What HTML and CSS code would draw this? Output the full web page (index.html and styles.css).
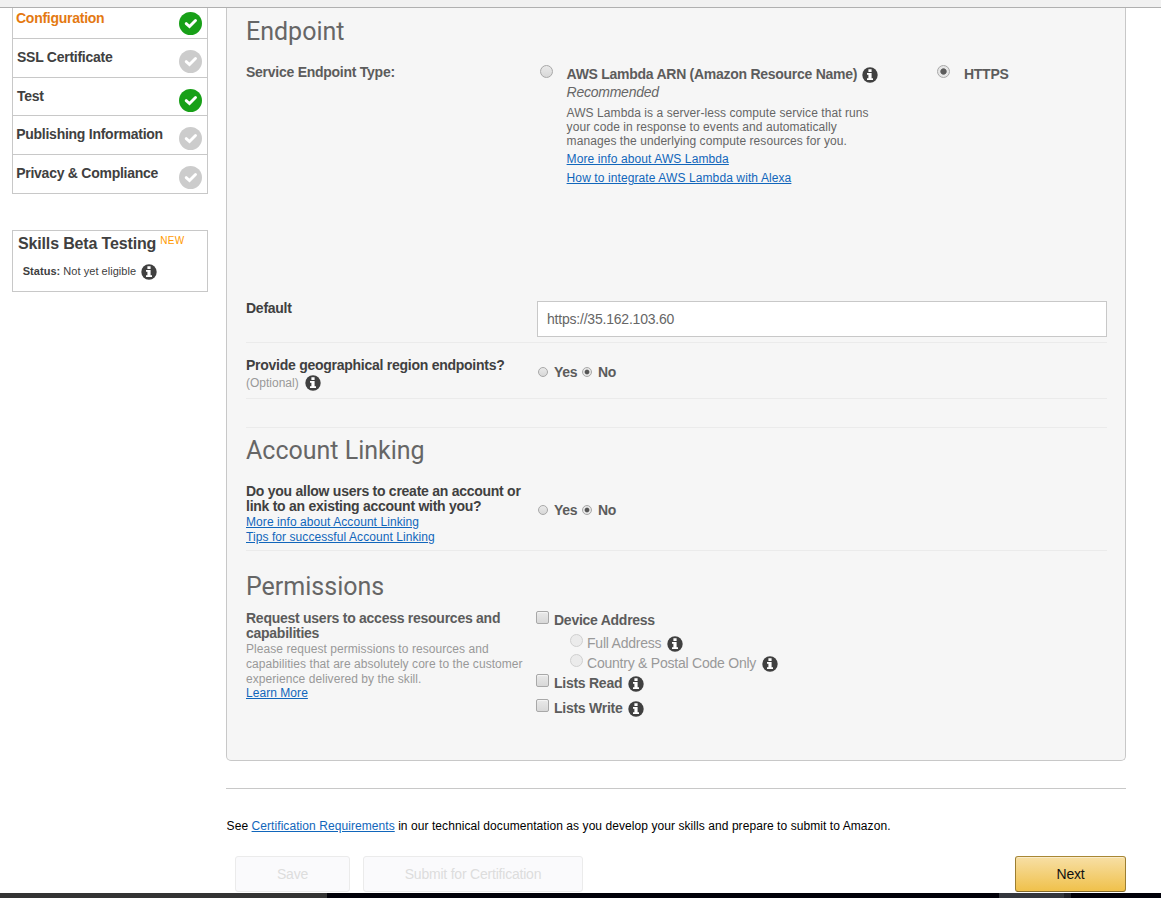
FILE: index.html
```html
<!DOCTYPE html>
<html lang="en">
<head>
<meta charset="utf-8">
<title>Skill Configuration</title>
<link rel="stylesheet" href="styles.css">
</head>
<body>
<svg class="defs" width="0" height="0" aria-hidden="true">
  <symbol id="check" viewBox="0 0 23 23"><circle cx="11.5" cy="11.5" r="11.5" fill="currentColor"/><path d="M7.2 11.6l3.3 2.9 6-6" fill="none" stroke="#fff" stroke-width="2.9" stroke-linecap="round"/></symbol>
  <symbol id="info" viewBox="0 0 16 16"><circle cx="8" cy="8" r="7.7" fill="#404040"/><path d="M6.4 2.2h3.2v2.8H6.4zM5 6h4.6v5.2H11V13H5v-1.8h1.4V7.8H5z" fill="#fff"/></symbol>
</svg>
<div class="topbar"></div>
<main class="page">
  <aside class="sidebar">
    <nav class="steps">
      <a class="step first active"><span>Configuration</span><svg class="check done"><use href="#check"/></svg></a>
      <a class="step"><span>SSL Certificate</span><svg class="check"><use href="#check"/></svg></a>
      <a class="step short"><span>Test</span><svg class="check done"><use href="#check"/></svg></a>
      <a class="step tight"><span>Publishing Information</span><svg class="check"><use href="#check"/></svg></a>
      <a class="step tight"><span>Privacy &amp; Compliance</span><svg class="check"><use href="#check"/></svg></a>
    </nav>
    <section class="beta">
      <h3><span>Skills Beta Testing</span> <span class="new">NEW</span></h3>
      <p><b>Status:</b>&nbsp;<span>Not yet eligible</span><svg class="info"><use href="#info"/></svg></p>
    </section>
  </aside>
  <div class="content">
    <section class="panel">
      <h2>Endpoint</h2>
      <div class="row type-row">
        <div class="label soft">Service Endpoint Type:</div>
        <div class="types">
          <input type="radio" name="type">
          <div class="lambda">
            <div class="opt-title"><span>AWS Lambda ARN (Amazon Resource Name)</span><svg class="info"><use href="#info"/></svg></div>
            <em>Recommended</em>
            <p>AWS Lambda is a server-less compute service that runs<br>your code in response to events and automatically<br>manages the underlying compute resources for you.</p>
            <a href="#">More info about AWS Lambda</a>
            <a href="#">How to integrate AWS Lambda with Alexa</a>
          </div>
          <input type="radio" name="type" checked>
          <div class="opt-title">HTTPS</div>
        </div>
      </div>
      <div class="row default-row">
        <div class="label">Default</div>
        <input class="url" type="text" value="https://35.162.103.60">
      </div>
      <div class="row geo-row">
        <div>
          <div class="label">Provide geographical region endpoints?</div>
          <div class="optional"><span>(Optional)</span><svg class="info"><use href="#info"/></svg></div>
        </div>
        <div class="yesno"><input type="radio" name="geo"><span>Yes</span><input type="radio" name="geo" checked><span>No</span></div>
      </div>
      <div class="row blank-row"></div>
      <h2 class="h-account">Account Linking</h2>
      <div class="row account-row">
        <div>
          <div class="label">Do you allow users to create an account or<br>link to an existing account with you?</div>
          <div class="small-links"><a href="#">More info about Account Linking</a><a href="#">Tips for successful Account Linking</a></div>
        </div>
        <div class="yesno"><input type="radio" name="link"><span>Yes</span><input type="radio" name="link" checked><span>No</span></div>
      </div>
      <h2 class="h-perm">Permissions</h2>
      <div class="row perm-row">
        <div>
          <div class="label soft">Request users to access resources and<br>capabilities</div>
          <p class="hint">Please request permissions to resources and<br>capabilities that are absolutely core to the customer<br>experience delivered by the skill.</p>
          <a class="learn" href="#">Learn More</a>
        </div>
        <div class="perms">
          <label class="perm p-device"><input type="checkbox"><span>Device Address</span></label>
          <label class="perm sub"><input type="radio" disabled><span>Full Address</span><svg class="info"><use href="#info"/></svg></label>
          <label class="perm sub"><input type="radio" disabled><span>Country &amp; Postal Code Only</span><svg class="info"><use href="#info"/></svg></label>
          <label class="perm p-read"><input type="checkbox"><span>Lists Read</span><svg class="info"><use href="#info"/></svg></label>
          <label class="perm"><input type="checkbox"><span>Lists Write</span><svg class="info"><use href="#info"/></svg></label>
        </div>
      </div>
    </section>
    <footer class="footer">
      <p class="see">See <a href="#">Certification Requirements</a> in our technical documentation as you develop your skills and prepare to submit to Amazon.</p>
      <div class="actions">
        <button class="btn save" disabled>Save</button>
        <button class="btn submit" disabled>Submit for Certification</button>
        <button class="btn next">Next</button>
      </div>
    </footer>
  </div>
</main>
<div class="taskbar"><i class="t-search"></i><i class="t-gap"></i><i class="t-active"></i><i class="t-edge"></i></div>
</body>
</html>
```
FILE: styles.css
```css
* { box-sizing: border-box; margin: 0; padding: 0; }
body {
  width: 1161px; height: 898px; overflow: hidden;
  display: flex; flex-direction: column;
  background: #fff; color: #404040;
  font: 14px/15px "Liberation Sans", Arial, sans-serif;
}
.defs { position: absolute; }
a { color: #1166bb; }
svg { flex: none; display: block; }
.topbar { height: 8px; flex: none; background: #f1f1f1; border-bottom: 1px solid #b0b0b0; }
.page { display: flex; gap: 18px; height: 885px; padding-left: 12px; flex: none; }

/* Sidebar */
.sidebar { width: 196px; flex: none; }
.steps { border: solid #c8c8c8; border-width: 0 1px; }
.step {
  height: 39px; display: flex; justify-content: space-between; align-items: flex-start;
  padding: 11px 5px 0 4px; border-bottom: 1px solid #c8c8c8;
  color: #404040; font-weight: bold; letter-spacing: -.26px; white-space: nowrap;
}
.step.short { height: 38px; }
.step.tight { padding-left: 3.2px; }
.step.first { height: 31px; padding-top: 3px; padding-left: 3px; }
.step.active { color: #e47911; }
.check { width: 23px; height: 23px; color: #ccc; }
.check.done { color: #18a018; }
.first .check { margin-top: 1px; }
.beta { margin-top: 36px; height: 62px; border: 1px solid #c8c8c8; padding: 4px 5px; white-space: nowrap; }
.beta h3 { display: flex; gap: 4px; font-size: 16px; line-height: 18px; letter-spacing: -.15px; }
.new { font-size: 10px; line-height: 12px; font-weight: normal; letter-spacing: .3px; color: #ff9900; }
.beta p { display: flex; font-size: 11px; line-height: 14px; letter-spacing: .04px; padding: 11px 0 0 4.7px; }
.beta .info { margin-left: 5px; }

/* Main panel */
.content { width: 900px; }
.panel {
  height: 753px; padding: 8px 18px 0 19px; background: #f6f6f6;
  border: 1px solid #c8c8c8; border-top: 0; border-radius: 0 0 5px 5px; color: #666;
}
h2 { height: 30px; font: 25px/32px Roboto, sans-serif; color: #666; }
.row { display: grid; grid-template-columns: 291px 1fr; }
.label { font-weight: bold; letter-spacing: -.26px; color: #404040; white-space: nowrap; }
.label.soft { color: #5c5c5c; }
.info { width: 16px; height: 16px; }
.type-row { height: 236px; margin-top: 19px; }
.types { display: grid; grid-template-columns: 26.6px 370.4px 27px 1fr; padding-left: 3px; }
.opt-title { display: flex; font-weight: bold; letter-spacing: -.27px; padding-top: 2px; white-space: nowrap; color: #5c5c5c; }
.opt-title .info { margin: 0 0 -1px 5px; }
.lambda em { display: block; margin-top: 3px; letter-spacing: -.25px; }
.lambda p { font-size: 12px; line-height: 14px; letter-spacing: .07px; margin: 6px 0 4px; white-space: nowrap; }
.lambda a { display: table; font-size: 12px; line-height: 14px; letter-spacing: .1px; margin-bottom: 5px; white-space: nowrap; }
.default-row { height: 42px; border-bottom: 1px solid #ebebeb; }
.url {
  width: 570px; height: 36px; padding: 0 9px; border: 1px solid #c8c8c8; background: #fff;
  font: inherit; letter-spacing: -.21px; color: #666;
}
.geo-row { height: 56px; padding-top: 15px; border-bottom: 1px solid #ebebeb; }
.optional { display: flex; font-size: 12px; color: #999; padding-top: 2px; gap: 6px; }
.optional span { padding-top: 1px; }
.yesno { display: flex; font-weight: bold; letter-spacing: -.26px; color: #5c5c5c; padding: 7px 0 0 1px; }
.yesno span { width: 28px; }
.blank-row { height: 29px; border-bottom: 1px solid #ebebeb; }
.h-account { margin-top: 7px; }
.account-row { height: 67px; margin-top: 19px; border-bottom: 1px solid #ebebeb; }
.account-row .yesno { padding-top: 19px; }
.small-links { display: flex; flex-direction: column; align-items: flex-start; font-size: 12px; letter-spacing: .07px; padding-top: 1px; }
.h-perm { margin-top: 20px; }
.perm-row { margin-top: 10px; }
.hint { font-size: 12px; letter-spacing: .06px; color: #999; white-space: nowrap; padding-top: 1px; }
.learn { display: block; font-size: 12px; line-height: 14px; letter-spacing: .05px; margin-top: -1px; }
.perms { margin-left: -1px; }
.perm { display: flex; height: 20px; font-weight: bold; letter-spacing: -.26px; color: #5c5c5c; }
.perm span { margin: 2px 6px 0 5px; white-space: nowrap; }
.perm .info { margin-top: 2px; }
.perm.sub { padding-left: 34px; font-weight: normal; letter-spacing: -.23px; color: #999; }
.perm.sub span { margin-left: 4px; }
.p-device { height: 23px; }
.p-read { height: 25px; }

/* Form controls */
input[type=radio], input[type=checkbox] {
  appearance: none; width: 13px; height: 13px; flex: none;
  border: 1px solid #a8a8a8; background: linear-gradient(#e9e9e9, #d8d8d8);
}
input[type=radio] { border-radius: 50%; }
input[type=checkbox] { border-radius: 2px; box-shadow: inset 0 1px 1px #f5f5f5; }
input[type=radio]:checked { background: radial-gradient(circle, #5c5c5c 0 2.7px, #e6e6e6 3.6px); }
.yesno input[type=radio] { width: 10px; height: 10px; margin: 2px 6px 0 0; }
.yesno input[type=radio]:checked { background: radial-gradient(circle, #555 0 1.9px, #e6e6e6 2.8px); }
input:disabled { border-color: #d0d0d0 !important; background: #ebebeb !important; }

/* Footer */
.footer { margin-top: 27px; border-top: 1px solid #c8c8c8; }
.see { font-size: 12px; letter-spacing: .068px; color: #000; padding: 30px 0 0 .6px; white-space: nowrap; }
.actions { display: flex; padding: 22px 0 0 9px; }
.btn { height: 36px; border: 1px solid #ebebeb; border-radius: 3px; background: #fafafc; font: inherit; letter-spacing: -.21px; color: #ddd; }
.save { width: 115px; margin-right: 13px; }
.submit { width: 220px; }
.next {
  width: 111px; margin-left: auto; color: #111; border-color: #a88734 #9c7e31 #846a29;
  background: linear-gradient(#f7dfa5, #f0c14b); box-shadow: inset 0 1px 0 rgba(255,255,255,.4);
}
.taskbar { height: 5px; flex: none; display: flex; background: #000008; }
.t-search { width: 327px; background: #333; }
.t-gap { width: 672px; }
.t-active { width: 65px; background: #33363c; }
.t-edge { width: 7px; background: #202228; }
```
